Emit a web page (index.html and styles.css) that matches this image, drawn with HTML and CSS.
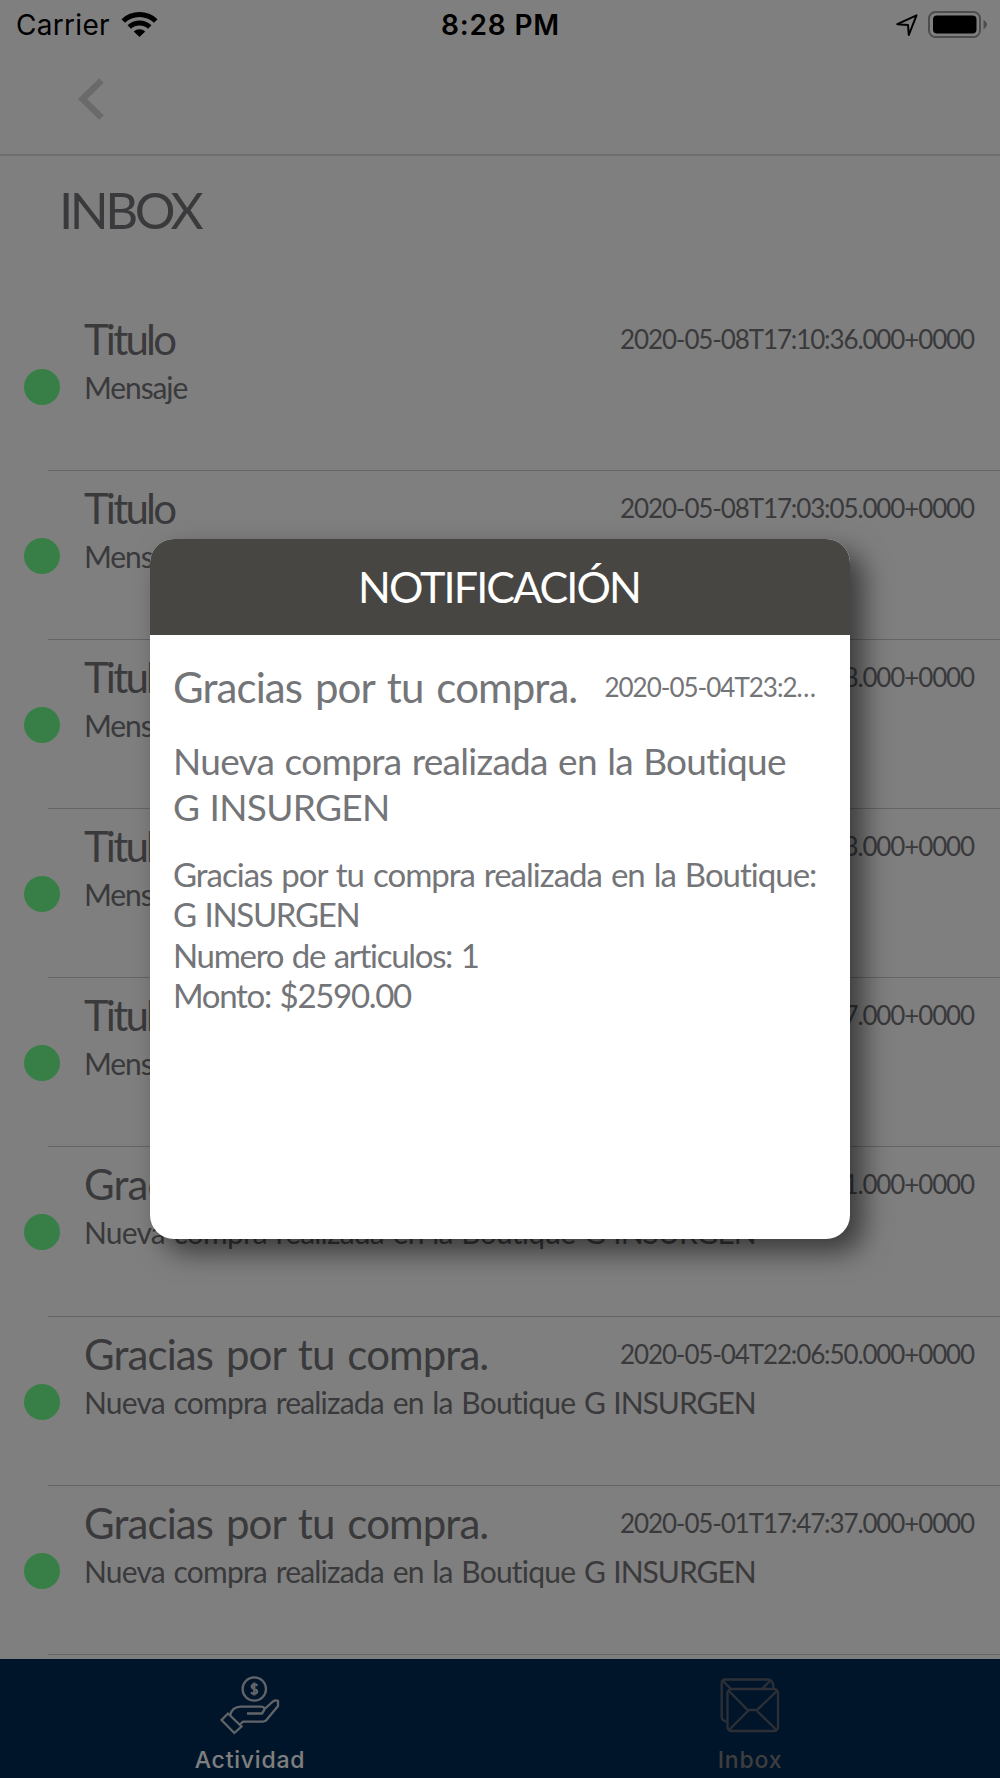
FILE: index.html
```html
<!DOCTYPE html>
<html lang="es">
<head>
  <meta charset="UTF-8">
  <title>Inbox</title>
  <link rel="stylesheet" href="styles.css">
</head>
<body>

  <div class="screen">
    <div class="status-bar">
      <div class="status-left">
        <span class="carrier">Carrier</span>
        <svg class="wifi" width="37" height="27" viewBox="0 0 37 27">
          <path d="M0.500 9.200 A26 26 0 0 1 36.500 9.200 L33 12.700 A21 21 0 0 0 4 12.700 Z"/>
          <path d="M6.500 15.300 A17.500 17.500 0 0 1 30.500 15.300 L27 18.800 A12.500 12.500 0 0 0 10 18.800 Z"/>
          <path d="M12.700 21.400 A8.800 8.800 0 0 1 24.300 21.400 L18.500 27 Z"/>
        </svg>
      </div>
      <div class="clock">8:28 PM</div>
      <div class="status-right">
        <svg width="22" height="23" viewBox="0 0 22 23">
          <path d="M1.300 10.200 L20.500 1.300 L12.800 21 L12 11 Z" fill="none" stroke="#000" stroke-width="2" stroke-linejoin="round"/>
        </svg>
        <svg width="60" height="28" viewBox="0 0 60 28">
          <rect x="1" y="1" width="51" height="25" rx="6.500" fill="none" stroke="#9a9a9a" stroke-width="2"/>
          <rect x="5" y="4.500" width="43.500" height="18" rx="4" fill="#000"/>
          <path d="M55.500 9 Q59 11 59 13.500 Q59 16 55.500 18.500 Z" fill="#9a9a9a"/>
        </svg>
      </div>
    </div>

    <div class="nav-bar">
      <svg width="30" height="46" viewBox="0 0 30 46">
        <path d="M24.500 3.500 L5.500 22 L24.500 40.500" fill="none" stroke="#d4d4d4" stroke-width="6.500"/>
      </svg>
    </div>

    <h1>INBOX</h1>

    <div class="messages" id="messages"></div>

    <div class="tab-bar">
      <div class="tab active">
        <svg width="60" height="60" viewBox="0 0 60 60">
          <circle cx="34.300" cy="14" r="11.700"/>
          <path d="M37.500 10.500 Q34 8 32 10.500 Q31 13 34.300 14 Q38 15 36.800 17.700 Q34.500 20 31 17.500 M34.300 7.500 V20.500"/>
          <path d="M1.500 45 L8 38.500 L21.500 51.500 L14.300 58 Z"/>
          <path d="M10 40.500 Q12 32 21 31.700 H41 Q45.500 32 44 35.500 L42 38.500 H27 M44 34.500 L53 26.500 Q56 24.500 58 26 V31 L46 45.500 L43 46.700 H23 L20.500 49"/>
        </svg>
        <span>Actividad</span>
      </div>
      <div class="tab">
        <svg width="60" height="60" viewBox="0 0 60 60">
          <rect x="7.500" y="14" width="50.500" height="42" rx="4"/>
          <path d="M9 16 L27.700 35 H37 L57 16 M9 55 L28 36 M56.500 55 L37 36"/>
          <path d="M6.500 47 Q1.700 45 1.700 42 V8 Q1.700 4.500 5.500 4.500 H48 Q53.500 5 53.500 13 M3 6 L11 14 M50 6 L42 14"/>
        </svg>
        <span>Inbox</span>
      </div>
    </div>
  </div>

  <div class="overlay">
    <div class="dialog">
      <div class="dialog-header">NOTIFICACIÓN</div>
      <div class="dialog-body">
        <div class="dialog-top">
          <div class="title">Gracias por tu compra.</div>
          <div class="date">2020-05-04T23:2…</div>
        </div>
        <div class="subtitle">Nueva compra realizada en la Boutique<br><span class="caps">G INSURGEN</span></div>
        <div class="detail">
          Gracias por tu compra realizada en la Boutique:<br>
          <span class="totals">G INSURGEN<br>Numero de articulos: 1<br>Monto: $2590.00</span>
        </div>
      </div>
    </div>
  </div>

  <script>
    const compra = ["Gracias por tu compra.", "Nueva compra realizada en la Boutique <span class=\"caps\">G INSURGEN</span>"];
    const aviso = ["Titulo", "Mensaje"];

    const messages = [
      [aviso, "2020-05-08T17:10:36.000+0000"],
      [aviso, "2020-05-08T17:03:05.000+0000"],
      [aviso, "2020-05-08T16:58:18.000+0000"],
      [aviso, "2020-05-08T16:52:43.000+0000"],
      [aviso, "2020-05-08T16:47:27.000+0000"],
      [compra, "2020-05-04T23:21:11.000+0000"],
      [compra, "2020-05-04T22:06:50.000+0000"],
      [compra, "2020-05-01T17:47:37.000+0000"]
    ];

    const list = document.getElementById("messages");

    messages.forEach(([text, date]) => {
      const row = document.createElement("div");
      row.classList.add("message");
      if (text === aviso) row.classList.add("aviso");
      row.innerHTML = `
        <div class="dot"></div>
        <div class="message-main">
          <div class="message-top">
            <div class="title">${text[0]}</div>
            <div class="date">${date}</div>
          </div>
          <div class="text">${text[1]}</div>
        </div>`;
      list.appendChild(row);
    });
  </script>
</body>
</html>
```

FILE: styles.css
```css
* {
  box-sizing: border-box;
}

body {
  margin: 0;
  font-family: Lato, sans-serif;
  color: #747578;
  background: #fff;
}

.screen {
  height: 1778px;
  display: flex;
  flex-direction: column;
  overflow: hidden;
}

/* status bar */
.status-bar {
  height: 53px;
  flex-shrink: 0;
  display: grid;
  grid-template-columns: 1fr auto 1fr;
  align-items: center;
  padding: 0 12px 3px 16px;
  font-family: Inter, sans-serif;
  font-size: 28px;
  line-height: 34px;
  color: #000;
}

.status-left,
.status-right {
  display: flex;
  align-items: center;
  gap: 11px;
}

.status-right {
  justify-content: flex-end;
  gap: 10px;
}

.carrier {
  letter-spacing: 0.3px;
}

.wifi {
  margin-top: -3px;
}

.clock {
  font-weight: 600;
  letter-spacing: 0.8px;
  margin-right: 3px;
}

/* header */
.nav-bar {
  height: 103px;
  flex-shrink: 0;
  padding: 24px 0 0 77px;
  border-bottom: 2px solid #dedede;
}

h1 {
  margin: 0;
  height: 146px;
  flex-shrink: 0;
  padding: 24px 0 0 59px;
  font-size: 51px;
  line-height: 60px;
  font-weight: 400;
  letter-spacing: -3.5px;
}

/* message list */
.messages {
  flex: 1;
  min-height: 0;
  overflow: hidden;
}

.message {
  display: flex;
  height: 169.1px;
  position: relative;
  padding: 0 26px 0 24px;
}

.message::after {
  content: "";
  position: absolute;
  left: 48px;
  right: 0;
  bottom: 0;
  height: 1px;
  background: #c8c8cb;
}

.dot {
  width: 36px;
  height: 36px;
  flex-shrink: 0;
  margin: 67px 24px 0 0;
  border-radius: 50%;
  background: #6fff8e;
}

.message-main {
  flex: 1;
  padding-top: 12px;
}

.message-top,
.dialog-top {
  display: flex;
  justify-content: space-between;
}

.title {
  font-size: 42px;
  line-height: 50px;
  letter-spacing: -0.9px;
  word-spacing: 3px;
  white-space: nowrap;
}

.date {
  margin-top: 10px;
  font-size: 26px;
  line-height: 30px;
  letter-spacing: -1.13px;
  white-space: nowrap;
}

.text {
  margin-top: 5px;
  font-size: 30px;
  line-height: 36px;
  letter-spacing: -0.8px;
  word-spacing: 1.8px;
}

.text .caps {
  letter-spacing: -1px;
}

.aviso .title {
  letter-spacing: -2.8px;
}

.aviso .text {
  letter-spacing: -1.1px;
}

/* tab bar */
.tab-bar {
  height: 119px;
  flex-shrink: 0;
  display: flex;
  background: #002a54;
}

.tab {
  flex: 1;
  display: flex;
  flex-direction: column;
  align-items: center;
  padding-top: 16px;
  font-family: Inter, sans-serif;
  font-size: 23px;
  line-height: 28px;
  font-weight: 500;
  letter-spacing: 0.8px;
  color: #7d7d7d;
}

.tab span {
  margin-top: 11px;
}

.tab svg {
  fill: none;
  stroke: #58616d;
  stroke-width: 2.3;
}

.tab.active {
  color: #fff;
}

.tab.active svg {
  stroke: #c2c8d0;
}

/* notification dialog */
.overlay {
  position: absolute;
  inset: 0;
  height: 1778px;
  display: flex;
  align-items: center;
  justify-content: center;
  background: rgba(0, 0, 0, 0.5);
}

.dialog {
  width: 700px;
  height: 700px;
  border-radius: 24px;
  background: #fff;
  box-shadow: 13px 13px 28px rgba(0, 0, 0, 0.55);
}

.dialog-header {
  height: 96px;
  border-radius: 24px 24px 0 0;
  background: #474643;
  color: #fff;
  font-size: 43px;
  line-height: 95px;
  letter-spacing: -1.9px;
  text-indent: -2px;
  text-align: center;
}

.dialog-body {
  padding: 27px 35px 0 23px;
}

.dialog-top .date {
  letter-spacing: -1px;
}

.subtitle {
  margin-top: 26px;
  font-size: 37px;
  line-height: 45.5px;
  letter-spacing: -0.7px;
  word-spacing: 1.5px;
  white-space: nowrap;
}

.detail {
  margin-top: 25px;
  font-size: 33px;
  line-height: 40.3px;
  letter-spacing: -1px;
  word-spacing: 1.5px;
  white-space: nowrap;
}

.detail .totals {
  letter-spacing: -1.3px;
}
```
